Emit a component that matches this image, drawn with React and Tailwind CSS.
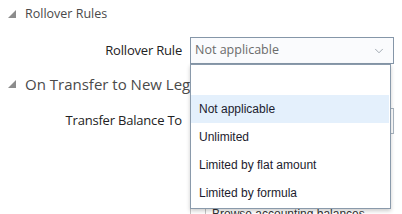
import { ChevronDown } from 'lucide-react';

function Triangle() {
    return (
        <svg width="8" height="8" viewBox="0 0 8 8" className="shrink-0">
            <polygon points="8,0 8,8 0,8" fill="#8c8c8c" />
        </svg>
    );
}

export default function App() {
    const options = ['Not applicable', 'Unlimited', 'Limited by flat amount', 'Limited by formula'];

    return (
        <div className="relative w-[402px] h-[214px] overflow-hidden bg-white font-['Segoe_UI','Open_Sans',sans-serif]">
            {/* Rollover Rules */}
            <div className="flex items-center gap-[9px] pl-[8px] h-[28px]">
                <Triangle />
                <span className="text-[12.5px] text-[#4a4a4a]">Rollover Rules</span>
            </div>

            <div className="flex items-center mt-[9px] h-[27px]">
                <div className="w-[182px] text-right text-[13px] tracking-[-0.2px] text-[#222]">Rollover Rule</div>
                <div className="ml-[8px] w-[204px] h-[27px] border border-[#8596a8] bg-[#fafbfd] flex items-center justify-between pl-[4px] pr-[7px]">
                    <span className="text-[12.5px] text-[#6b6b6b]">Not applicable</span>
                    <ChevronDown size={14} strokeWidth={1.2} color="#7c8894" />
                </div>
            </div>

            {/* On Transfer */}
            <div className="flex items-center gap-[9px] pl-[8px] h-[40px]">
                <Triangle />
                <span className="text-[15px] text-[#4a4a4a] whitespace-nowrap">On Transfer to New Legal Employer</span>
            </div>

            <div className="flex items-center mt-[4px] h-[26px]">
                <div className="w-[182px] text-right text-[13px] tracking-[-0.2px] text-[#222]">Transfer Balance To</div>
                <div className="ml-[8px] w-[204px] h-[26px] border border-[#a9b4bf] bg-white" />
            </div>

            <div className="flex mt-[70px] h-[30px] ml-[190px] border-l border-[#c4c4c4]">
                <div className="ml-[14px] border-l border-[#c4c4c4] pl-[6px] pt-[1px] text-[12px] text-[#333] font-['Liberation_Sans',sans-serif]">Browse accounting balances</div>
            </div>

            {/* Dropdown list */}
            <div className="absolute left-[190px] top-[64px] w-[201px] h-[145px] border border-[#8a9aab] bg-white shadow-[0_2px_4px_rgba(0,0,0,0.2)] font-['Liberation_Sans',Arial,sans-serif] text-[12px] text-[#1c1c2e]">
                <div className="h-[30px]" />
                {options.map((o, i) => (
                    <div
                        key={o}
                        className={`h-[28px] flex items-center pl-[8px] mr-[1px] ${i === 0 ? 'bg-[#e4f0fc]' : ''}`}
                    >
                        {o}
                    </div>
                ))}
            </div>
        </div>
    );
}
